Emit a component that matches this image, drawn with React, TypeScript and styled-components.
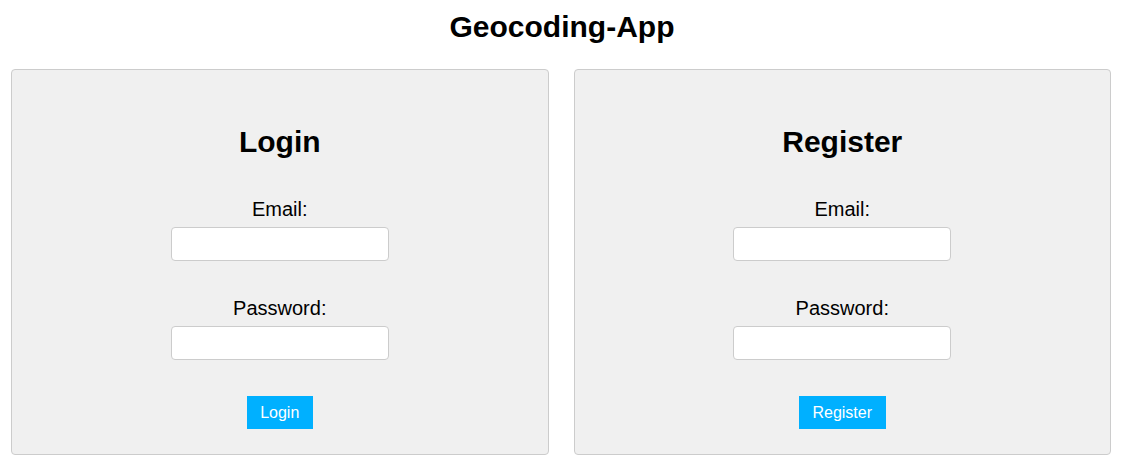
import React from "react";
import styled, { createGlobalStyle } from "styled-components";

const Global = createGlobalStyle`
  html, body { margin: 0; padding: 0; background: #ffffff; }
  body { font-family: "Liberation Sans", Arial, sans-serif; color: #000; }
  * { box-sizing: border-box; }
`;

const Page = styled.div`
  display: flex;
  flex-direction: column;
  align-items: stretch;
`;

const Title = styled.h1`
  margin: 10px 0 0;
  height: 34px;
  line-height: 34px;
  font-size: 30px;
  font-weight: bold;
  text-align: center;
`;

const Panels = styled.div`
  display: grid;
  grid-template-columns: 1fr 1fr;
  gap: 25px;
  padding: 0 13px 0 11px;
  margin-top: 25px;
`;

const Card = styled.section`
  background: #f0f0f0;
  border: 1px solid #cccccc;
  border-radius: 4px;
  height: 386px;
  display: flex;
  flex-direction: column;
  align-items: center;
  padding-top: 55px;
`;

const CardTitle = styled.h2`
  margin: 0;
  height: 34px;
  line-height: 34px;
  font-size: 30px;
  font-weight: bold;
`;

const Field = styled.div<{ $first?: boolean }>`
  display: flex;
  flex-direction: column;
  align-items: center;
  margin-top: ${(p) => (p.$first ? "39px" : "36px")};
`;

const Label = styled.label`
  font-size: 20px;
  line-height: 23px;
  height: 23px;
`;

const Input = styled.input`
  margin-top: 6px;
  width: 218px;
  height: 34px;
  border: 1px solid #cccccc;
  border-radius: 4px;
  background: #ffffff;
  padding: 0 8px;
  font-size: 16px;
  font-family: inherit;
  outline: none;
`;

const Button = styled.button`
  margin-top: 36px;
  height: 33px;
  padding: 0 13.5px;
  border: none;
  border-radius: 0;
  background: #00b0ff;
  color: #ffffff;
  font-family: "Liberation Sans", Arial, sans-serif;
  font-size: 16px;
  cursor: pointer;
`;

function FormCard({ title, action }: { title: string; action: string }) {
  return (
    <Card>
      <CardTitle>{title}</CardTitle>
      <Field $first>
        <Label>Email:</Label>
        <Input type="email" />
      </Field>
      <Field>
        <Label>Password:</Label>
        <Input type="password" />
      </Field>
      <Button>{action}</Button>
    </Card>
  );
}

export default function App() {
  return (
    <Page>
      <Global />
      <Title>Geocoding-App</Title>
      <Panels>
        <FormCard title="Login" action="Login" />
        <FormCard title="Register" action="Register" />
      </Panels>
    </Page>
  );
}
